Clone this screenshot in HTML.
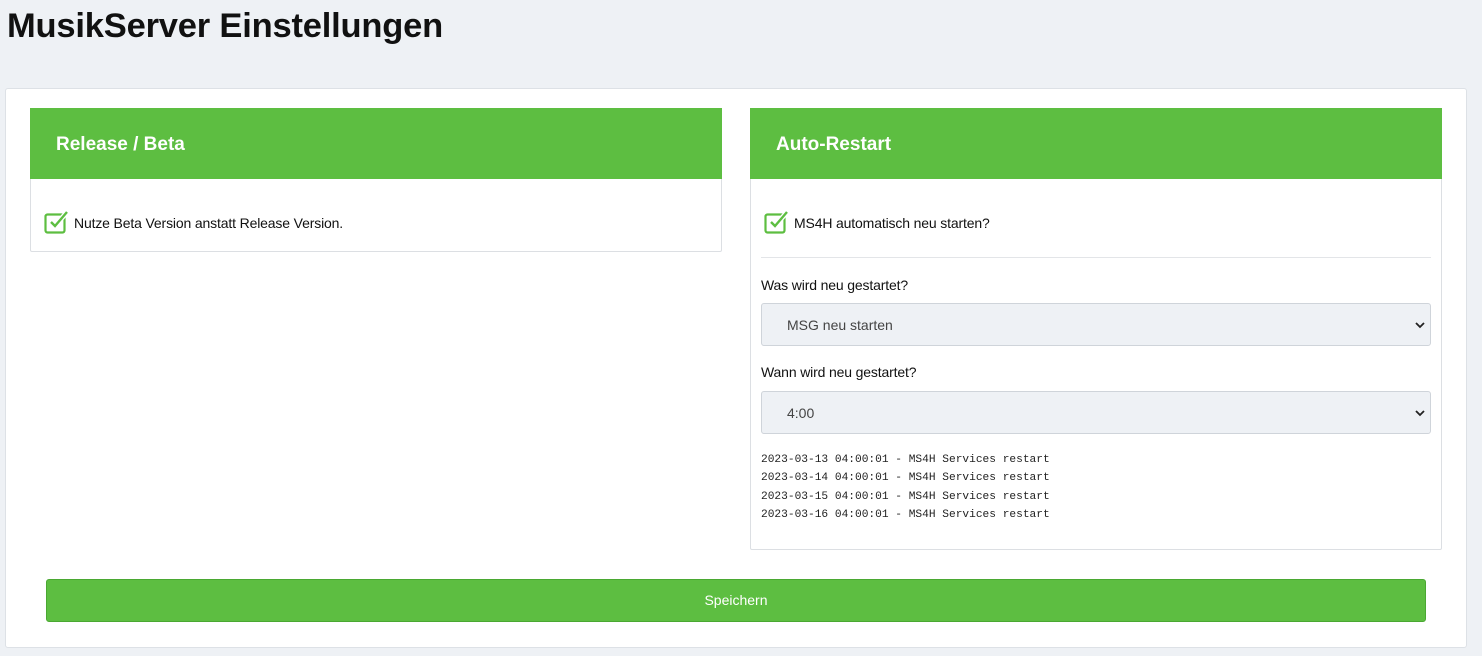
<!DOCTYPE html>
<html><head><style>
*{box-sizing:border-box}
body{margin:0;background:#eef1f5;font-family:"Liberation Sans",Arial,sans-serif;width:1482px;height:656px;overflow:hidden;position:relative;color:#111}
h1{position:absolute;left:7px;top:7px;margin:0;font-size:34.5px;font-weight:bold;letter-spacing:-0.2px}
.card{position:absolute;left:5px;top:88px;width:1462px;height:560px;background:#fff;border:1px solid #dde1e6;border-radius:3px}
.panel{position:absolute;background:#fff;border:1px solid #dcdfe3;border-radius:2px}
.hd{background:#5dbe41;height:71px;color:#fff;font-weight:bold;font-size:19px;padding:26px 0 0 26px;margin:-1px -1px 0 -1px}
.chk{position:absolute;font-size:14px;display:flex;align-items:center;letter-spacing:-0.15px}
.chk svg{margin-right:4px}
.lbl{position:absolute;left:10px;font-size:14px;letter-spacing:-0.15px}
.sel{position:absolute;left:10px;width:670px;height:43px;background:#eef1f5;border:1px solid #cfd4da;border-radius:3px;font-size:14px;color:#444;padding:13px 0 0 25px}
.sel svg{position:absolute;right:5px;top:17px}
.log{position:absolute;left:10px;top:342px;font-family:"Liberation Mono",monospace;font-size:11.2px;line-height:18.3px;color:#222}
.btn{position:absolute;left:46px;top:579px;width:1380px;height:43px;background:#5dbe41;border:1px solid #4aa832;border-radius:3px;color:#fff;font-size:14px;text-align:center;line-height:41px}
</style></head><body>
<h1>MusikServer Einstellungen</h1>
<div class="card"></div>
<div class="panel" style="left:30px;top:108px;width:692px;height:144px">
<div class="hd">Release / Beta</div>
<div class="chk" style="left:13px;top:101px"><svg width="26" height="25" viewBox="0 0 26 25"><rect x="1.5" y="4.5" width="19" height="18" rx="2" fill="none" stroke="#5dbe41" stroke-width="2.2"/><path d="M7 12l4 4 12-14" fill="none" stroke="#fff" stroke-width="5"/><path d="M7 12l4 4 12-14" fill="none" stroke="#5dbe41" stroke-width="2.4"/></svg>Nutze Beta Version anstatt Release Version.</div>
</div>
<div class="panel" style="left:750px;top:108px;width:692px;height:442px">
<div class="hd">Auto-Restart</div>
<div class="chk" style="left:13px;top:101px"><svg width="26" height="25" viewBox="0 0 26 25"><rect x="1.5" y="4.5" width="19" height="18" rx="2" fill="none" stroke="#5dbe41" stroke-width="2.2"/><path d="M7 12l4 4 12-14" fill="none" stroke="#fff" stroke-width="5"/><path d="M7 12l4 4 12-14" fill="none" stroke="#5dbe41" stroke-width="2.4"/></svg>MS4H automatisch neu starten?</div>
<div style="position:absolute;left:10px;right:10px;top:148px;border-top:1px solid #e3e5e8"></div>
<div class="lbl" style="top:168px">Was wird neu gestartet?</div>
<div class="sel" style="top:194px">MSG neu starten<svg width="10" height="8" viewBox="0 0 10 8"><path d="M1 2l4 4 4-4" fill="none" stroke="#222" stroke-width="1.8"/></svg></div>
<div class="lbl" style="top:255px">Wann wird neu gestartet?</div>
<div class="sel" style="top:282px">4:00<svg width="10" height="8" viewBox="0 0 10 8"><path d="M1 2l4 4 4-4" fill="none" stroke="#222" stroke-width="1.8"/></svg></div>
<div class="log">2023-03-13 04:00:01 - MS4H Services restart<br>2023-03-14 04:00:01 - MS4H Services restart<br>2023-03-15 04:00:01 - MS4H Services restart<br>2023-03-16 04:00:01 - MS4H Services restart</div>
</div>
<div class="btn">Speichern</div>
</body></html>
